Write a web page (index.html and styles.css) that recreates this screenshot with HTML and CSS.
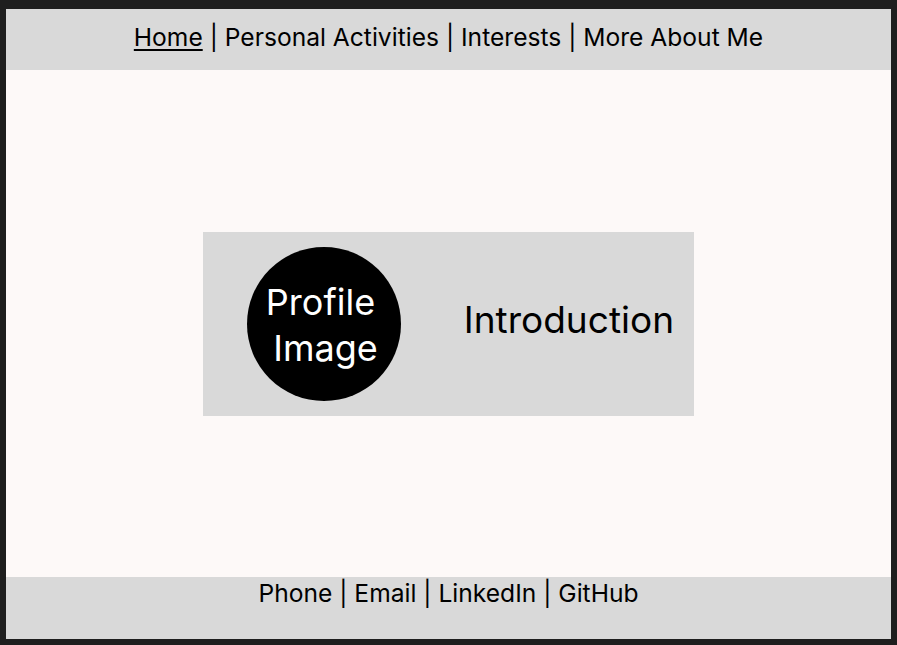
FILE: index.html
```html
<!DOCTYPE html>
<html lang="en">
<head>
<meta charset="utf-8">
<title>Home</title>
<link rel="stylesheet" href="styles.css">
</head>
<body>
<div class="frame">
  <header class="topbar">
    <nav class="nav"><a class="current" href="#">Home</a> | <a href="#">Personal Activities</a> | <a href="#">Interests</a> | <a href="#">More About Me</a></nav>
  </header>
  <main class="main">
    <section class="card">
      <div class="avatar">
        <div class="avatar-text">
          <span class="line-a">Profile</span>
          <span class="line-b">Image</span>
        </div>
      </div>
      <h1 class="intro">Introduction</h1>
    </section>
  </main>
  <footer class="bottombar">
    <nav class="nav"><a href="#">Phone</a> | <a href="#">Email</a> | <a href="#">LinkedIn</a> | <a href="#">GitHub</a></nav>
  </footer>
</div>
</body>
</html>
```

FILE: styles.css
```css
html, body {
  margin: 0;
  padding: 0;
}
body {
  background: #1e1e1e;
  font-family: Inter, "Noto Sans", sans-serif;
  color: #000;
}
.frame {
  margin: 9px 6px 6px 6px;
  height: 630px;
  display: flex;
  flex-direction: column;
  background: #fdf9f8;
}
.topbar {
  height: 61px;
  background: #d9d9d9;
  display: flex;
  justify-content: center;
  padding-top: 13px;
  box-sizing: border-box;
}
.nav {
  font-size: 24.6px;
  line-height: 30px;
  white-space: nowrap;
}
.nav a {
  color: #000;
  text-decoration: none;
}
.nav a.current {
  text-decoration: underline;
  text-decoration-thickness: 1.5px;
  text-underline-offset: 3px;
}
.main {
  flex: 1;
  display: flex;
  align-items: center;
  justify-content: center;
}
.card {
  width: 491px;
  height: 184px;
  background: #d9d9d9;
  display: flex;
  align-items: center;
  justify-content: space-between;
  padding: 0 20px 0 44px;
  box-sizing: border-box;
}
.avatar {
  width: 154px;
  height: 154px;
  border-radius: 50%;
  background: #000;
  color: #fff;
  display: flex;
  align-items: center;
  justify-content: center;
  font-size: 36px;
  line-height: 46px;
}
.avatar-text {
  display: flex;
  flex-direction: column;
  align-items: center;
  margin-top: 2px;
}
.line-a {
  padding-right: 7px;
}
.line-b {
  padding-left: 3px;
}
.intro {
  margin: 0 0 7px 0;
  font-weight: 400;
  font-size: 37px;
  line-height: 44px;
}
.bottombar {
  height: 62px;
  background: #d9d9d9;
  display: flex;
  justify-content: center;
  padding-top: 1px;
  box-sizing: border-box;
}
```
